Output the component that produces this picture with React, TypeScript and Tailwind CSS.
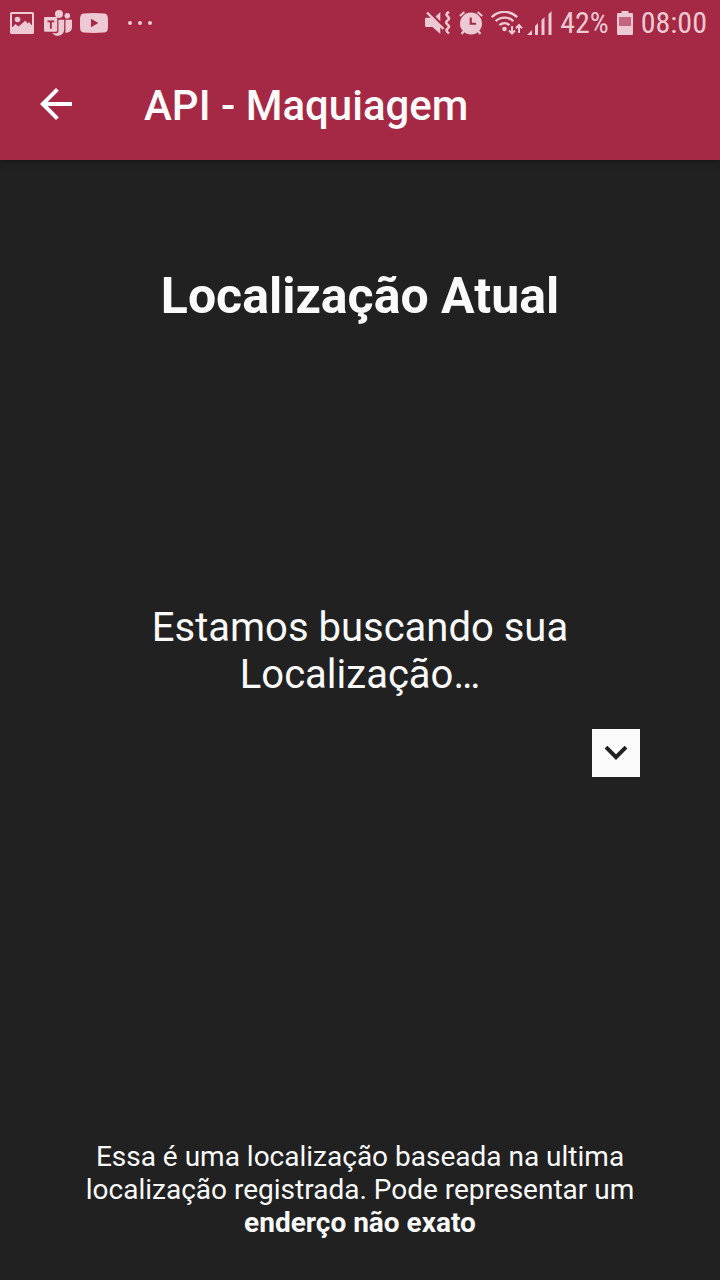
function PictureIcon() {
  return (
    <svg width="24" height="22" viewBox="0 0 24 22" fill="currentColor" aria-hidden="true">
      <path fillRule="evenodd" d="M1.500 0h21A1.500 1.500 0 0 1 24 1.500v19a1.500 1.500 0 0 1-1.500 1.500h-21A1.500 1.500 0 0 1 0 20.500v-19A1.500 1.500 0 0 1 1.500 0zM2 2v18h20V2z" />
      <circle cx="7.500" cy="7.500" r="2.800" />
      <path d="M2 15.500 5.500 12l3 2.500L15.500 8.500l2 3L19 10l3 3.500V20H2z" />
    </svg>
  );
}

function TeamsIcon() {
  return (
    <svg width="28" height="26" viewBox="0 0 28 26" fill="currentColor" aria-hidden="true">
      <circle cx="15" cy="4" r="4" />
      <circle cx="23.300" cy="5.800" r="2.800" />
      <path fillRule="evenodd" d="M1.200 7H12a1.200 1.200 0 0 1 1.200 1.200v12.300A1.200 1.200 0 0 1 12 21.700H1.200A1.200 1.200 0 0 1 0 20.500V8.200A1.200 1.200 0 0 1 1.200 7zM3.500 10.500v1.700h2.400v6.600h1.900v-6.600h2.400v-1.700z" />
      <path d="M14.400 9.800h5.800v9.400a6.700 6.700 0 0 1-12 4.100h3.900c1.500 0 2.300-.9 2.300-2.300z" />
      <path d="M21.500 9.800H28v7.600a5.200 5.200 0 0 1-6.700 5 9 9 0 0 0 .2-2z" />
    </svg>
  );
}

function VideoIcon() {
  return (
    <svg width="28" height="20" viewBox="0 0 28 20" fill="currentColor" aria-hidden="true">
      <path fillRule="evenodd" d="M4 .4Q14-.4 24 .4q3.500.3 3.800 3.600.4 6 0 12-.3 3.300-3.800 3.600-10 .8-20 0Q.5 19.300.2 16q-.4-6 0-12Q.5.700 4 .4zM11 5.800v8.400l7.300-4.200z" />
    </svg>
  );
}

function MutedIcon() {
  return (
    <svg width="26" height="24" viewBox="0 0 26 24" aria-hidden="true">
      <path fill="currentColor" d="M0 8q0-1.300 1.300-1.300H7L15.300 15v8L7.500 16H1.300Q0 16 0 14.700zM10.500 5.500l4.800-4.500v9.300z" />
      <path fill="none" stroke="currentColor" strokeWidth="2.400" d="m2 1.500 16.500 16.500" />
      <path fill="none" stroke="currentColor" strokeWidth="2.600" strokeLinejoin="round" d="M24 .8q-3 2-2.400 3.200l2 2.500q.8 1-.2 2l-1.800 2q-.8 1 0 2l1.800 2q1 1 .2 2l-2 2.300q-.6 1.500 2.400 3.700" />
    </svg>
  );
}

function AlarmIcon() {
  return (
    <svg width="24" height="24" viewBox="0 0 24 24" fill="currentColor" aria-hidden="true">
      <path fillRule="evenodd" d="M12 1.500a11 11 0 1 1 0 22 11 11 0 0 1 0-22zM10.700 6.500v7.300H17v-2.100h-4.200V6.500z" />
      <path fill="none" stroke="currentColor" strokeWidth="2.200" d="m.8 5 4.700-4M18.500 1l4.700 4M5 20l-2.500 3M19 20l2.500 3" />
    </svg>
  );
}

function WifiIcon() {
  return (
    <svg width="32" height="24" viewBox="0 0 32 24" fill="none" stroke="currentColor" strokeWidth="2.400" aria-hidden="true">
      <path d="M.8 6.200C8-.9 19-.9 26.200 6.200M4.700 10.200c5-4.800 12.600-4.800 17.600 0M8.500 14.200c3-2.700 7-2.700 10 0" />
      <circle cx="13.500" cy="18" r="2.300" fill="currentColor" stroke="none" />
      <path strokeWidth="2" d="M21 15v7.500m-3-3 3 3 3-3M28 22v-8m-3 3.200 3-3.200 3 3.200" />
    </svg>
  );
}

function SignalIcon() {
  return (
    <svg width="25" height="24" viewBox="0 0 25 24" fill="currentColor" aria-hidden="true">
      <path d="M0 24l5-5v5zM8 15l3-3v12H8zM14.500 9l3-3V24h-3zM21.500 3l3-3v24h-3z" />
    </svg>
  );
}

function BatteryIcon() {
  return (
    <svg width="16" height="24" viewBox="0 0 16 24" fill="currentColor" aria-hidden="true">
      <path d="M4.500 0h7v2H15q1 0 1 1v20q0 1-1 1H1q-1 0-1-1V3q0-1 1-1h3.500z" />
      <path fill="#c4647f" d="M2 6h12v9H2z" />
    </svg>
  );
}

export default function App() {
  return (
    <div className="flex min-h-screen flex-col bg-[#212121] font-['Roboto',sans-serif] text-[#fafafa]">
      <header className="bg-[#a52844] shadow-[0_2px_6px_rgba(0,0,0,0.35)]">
        <div className="flex h-12 items-center justify-between pr-[13px] pb-0.5 pl-2.5 text-[#ecc9d3]">
          <div className="flex items-center gap-2">
            <span className="pr-0.5"><PictureIcon /></span>
            <TeamsIcon />
            <VideoIcon />
            <svg className="ml-3" width="26" height="4" viewBox="0 0 26 4" fill="currentColor" aria-hidden="true">
              <circle cx="2" cy="2" r="2" />
              <circle cx="12" cy="2" r="2" />
              <circle cx="22" cy="2" r="2" />
            </svg>
          </div>
          <div className="flex items-center gap-2 font-['Roboto_Condensed','Liberation_Sans_Narrow','Roboto',sans-serif] text-[30px] leading-8">
            <MutedIcon />
            <AlarmIcon />
            <div className="flex items-center gap-1">
              <WifiIcon />
              <SignalIcon />
            </div>
            <span>42%</span>
            <BatteryIcon />
            <time>08:00</time>
          </div>
        </div>
        <div className="flex h-28 items-center gap-16 px-8">
          <button type="button" aria-label="Voltar" className="flex size-12 items-center justify-center">
            <svg width="48" height="48" viewBox="0 0 24 24" fill="white" aria-hidden="true">
              <path d="M20 11H7.830l5.590-5.590L12 4l-8 8 8 8 1.410-1.410L7.830 13H20v-2z" />
            </svg>
          </button>
          <h1 className="pt-1 text-[42px] leading-[48px] font-medium">API - Maquiagem</h1>
        </div>
      </header>
      <main className="flex flex-1 flex-col px-20 pt-[106px] pb-[41px] text-center">
        <h2 className="text-[50px] leading-[60px] font-bold">Localização Atual</h2>
        <p className="mx-auto mt-[278px] max-w-[480px] text-[40px] leading-[47px]">Estamos buscando sua Localização…</p>
        <button type="button" aria-label="Mostrar opções" className="mt-[31px] flex size-12 items-center justify-center self-end bg-[#fafafa]">
          <svg width="24" height="16" viewBox="0 0 24 16" fill="none" stroke="#212121" strokeWidth="4" aria-hidden="true">
            <path d="m2 2.200 10 10 10-10" />
          </svg>
        </button>
        <p className="mt-auto text-[28px] leading-[33px]">
          Essa é uma localização baseada na ultima localização registrada. Pode representar um <strong className="font-bold">enderço não exato</strong>
        </p>
      </main>
    </div>
  );
}
